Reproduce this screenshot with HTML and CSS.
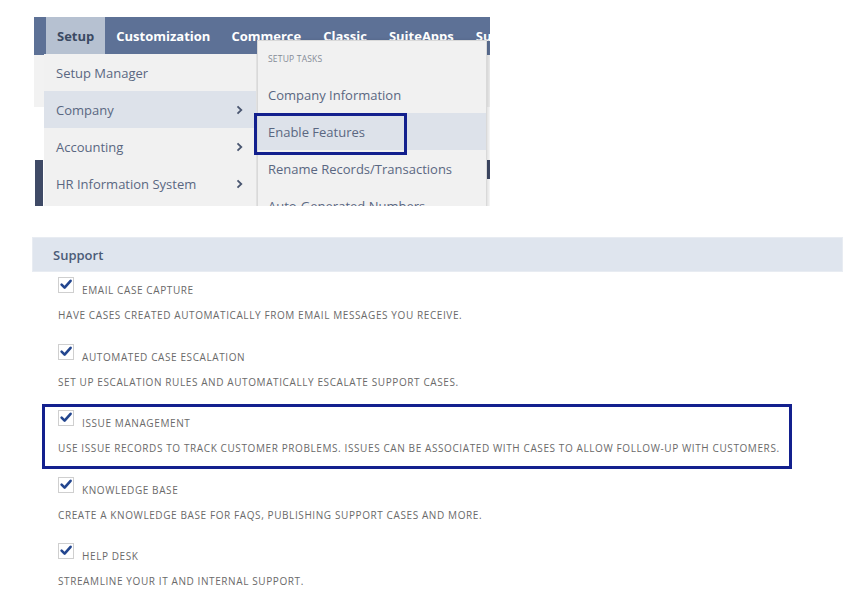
FILE: index.html
```html
<!DOCTYPE html>
<html>
<head>
<meta charset="utf-8">
<link rel="stylesheet" href="styles.css">
</head>
<body>
<div class="shot">
  <nav class="nav">
    <span class="tab tab-active">Setup</span>
    <span class="tab">Customization</span>
    <span class="tab">Commerce</span>
    <span class="tab">Classic</span>
    <span class="tab">SuiteApps</span>
    <span class="tab">Support</span>
  </nav>
  <div class="backdrop">
    <div class="bg-light"></div>
    <div class="bg-white"></div>
    <div class="bg-band"><span class="band-left"></span><span class="band-right"></span></div>
  </div>
  <ul class="menu menu-main">
    <li class="menu-item">Setup Manager</li>
    <li class="menu-item is-hover">Company <svg class="chev" width="7" height="10" viewBox="0 0 7 10"><path d="M1.5 1.3 L5.3 5 L1.5 8.7" fill="none" stroke="#4a5670" stroke-width="1.8"/></svg></li>
    <li class="menu-item">Accounting <svg class="chev" width="7" height="10" viewBox="0 0 7 10"><path d="M1.5 1.3 L5.3 5 L1.5 8.7" fill="none" stroke="#4a5670" stroke-width="1.8"/></svg></li>
    <li class="menu-item">HR Information System <svg class="chev" width="7" height="10" viewBox="0 0 7 10"><path d="M1.5 1.3 L5.3 5 L1.5 8.7" fill="none" stroke="#4a5670" stroke-width="1.8"/></svg></li>
  </ul>
  <ul class="menu menu-sub">
    <li class="menu-head">SETUP TASKS</li>
    <li class="menu-item">Company Information</li>
    <li class="menu-item is-hover">Enable Features</li>
    <li class="menu-item">Rename Records/Transactions</li>
    <li class="menu-item">Auto-Generated Numbers</li>
  </ul>
  <div class="mark mark-menu"></div>
</div>

<section class="support">
  <div class="section-head">Support</div>
  <div class="feature">
    <div class="feature-head">
      <svg class="cb" width="16" height="16" viewBox="0 0 16 16"><rect x="0.5" y="0.5" width="15" height="15" fill="#fff" stroke="#cfcfcf"/><path d="M3.6 7.6 L6.6 10.6 L12.6 3.8" fill="none" stroke="#23468f" stroke-width="2.6" stroke-linecap="round" stroke-linejoin="round"/></svg>
      <span class="feature-label">EMAIL CASE CAPTURE</span>
    </div>
    <p class="feature-desc">HAVE CASES CREATED AUTOMATICALLY FROM EMAIL MESSAGES YOU RECEIVE.</p>
  </div>
  <div class="feature">
    <div class="feature-head">
      <svg class="cb" width="16" height="16" viewBox="0 0 16 16"><rect x="0.5" y="0.5" width="15" height="15" fill="#fff" stroke="#cfcfcf"/><path d="M3.6 7.6 L6.6 10.6 L12.6 3.8" fill="none" stroke="#23468f" stroke-width="2.6" stroke-linecap="round" stroke-linejoin="round"/></svg>
      <span class="feature-label">AUTOMATED CASE ESCALATION</span>
    </div>
    <p class="feature-desc">SET UP ESCALATION RULES AND AUTOMATICALLY ESCALATE SUPPORT CASES.</p>
  </div>
  <div class="feature feature-marked">
    <div class="feature-head">
      <svg class="cb" width="16" height="16" viewBox="0 0 16 16"><rect x="0.5" y="0.5" width="15" height="15" fill="#fff" stroke="#cfcfcf"/><path d="M3.6 7.6 L6.6 10.6 L12.6 3.8" fill="none" stroke="#23468f" stroke-width="2.6" stroke-linecap="round" stroke-linejoin="round"/></svg>
      <span class="feature-label">ISSUE MANAGEMENT</span>
    </div>
    <p class="feature-desc">USE ISSUE RECORDS TO TRACK CUSTOMER PROBLEMS. ISSUES CAN BE ASSOCIATED WITH CASES TO ALLOW FOLLOW-UP WITH CUSTOMERS.</p>
    <div class="mark mark-feature"></div>
  </div>
  <div class="feature">
    <div class="feature-head">
      <svg class="cb" width="16" height="16" viewBox="0 0 16 16"><rect x="0.5" y="0.5" width="15" height="15" fill="#fff" stroke="#cfcfcf"/><path d="M3.6 7.6 L6.6 10.6 L12.6 3.8" fill="none" stroke="#23468f" stroke-width="2.6" stroke-linecap="round" stroke-linejoin="round"/></svg>
      <span class="feature-label">KNOWLEDGE BASE</span>
    </div>
    <p class="feature-desc">CREATE A KNOWLEDGE BASE FOR FAQS, PUBLISHING SUPPORT CASES AND MORE.</p>
  </div>
  <div class="feature">
    <div class="feature-head">
      <svg class="cb" width="16" height="16" viewBox="0 0 16 16"><rect x="0.5" y="0.5" width="15" height="15" fill="#fff" stroke="#cfcfcf"/><path d="M3.6 7.6 L6.6 10.6 L12.6 3.8" fill="none" stroke="#23468f" stroke-width="2.6" stroke-linecap="round" stroke-linejoin="round"/></svg>
      <span class="feature-label">HELP DESK</span>
    </div>
    <p class="feature-desc">STREAMLINE YOUR IT AND INTERNAL SUPPORT.</p>
  </div>
</section>
</body>
</html>
```

FILE: styles.css
```css
* { box-sizing: border-box; }
html, body { margin: 0; padding: 0; background: #fff; }
body { font-family: "Open Sans", "Noto Sans", sans-serif; color: #5a6781; }

.shot {
  position: relative;
  margin: 17px 0 0 34px;
  width: 456px;
  height: 189px;
  overflow: hidden;
  background: #fff;
}

.nav {
  display: flex;
  height: 38px;
  background: #5d7196;
  padding-left: 12px;
  white-space: nowrap;
}
.tab {
  display: flex;
  align-items: center;
  padding: 0 11px;
  color: #fff;
  font-weight: 700;
  font-size: 13px;
}
.tab:nth-child(3) { padding-left: 10px; }
.tab-active { background: #b6c1d1; color: #3b4a63; }

.backdrop { display: flex; flex-direction: column; }
.bg-light { height: 52px; background: #f2f2f2; }
.bg-white { height: 53px; background: #fff; }
.bg-band { display: flex; justify-content: space-between; height: 46px; }
.band-left { width: 8px; margin-left: 1px; background: #3f4a66; }
.band-right { width: 5px; height: 19px; background: #3f4a66; }

.menu {
  list-style: none;
  margin: 0;
  padding: 0;
  position: absolute;
  background: #f1f1f1;
}
.menu-main {
  left: 10px;
  top: 37px;
  width: 213px;
  height: 170px;
  border-right: 1px solid #e2e2e2;
}
.menu-sub {
  left: 223px;
  top: 23px;
  width: 230px;
  height: 180px;
  border: 1px solid #d9d9d9;
  box-shadow: 2px 0 3px rgba(0,0,0,0.12);
}
.menu-item {
  display: flex;
  align-items: center;
  justify-content: space-between;
  height: 37px;
  padding: 0 13px 0 12px;
  font-size: 13px;
  color: #5a6781;
  white-space: nowrap;
}
.menu-sub .menu-item { padding-left: 10px; }
.menu-item.is-hover { background: #dde2ea; }
.menu-head {
  display: flex;
  align-items: center;
  height: 35px;
  padding-left: 10px;
  font-size: 8.5px;
  letter-spacing: 0.2px;
  color: #858b96;
}
.chev { display: block; }

.mark {
  position: absolute;
  border: 3px solid #13208e;
  pointer-events: none;
}
.mark-menu { left: 220px; top: 96px; width: 153px; height: 42px; }

.support { margin-top: 31px; }
.section-head {
  margin-left: 32px;
  width: 811px;
  height: 35px;
  display: flex;
  align-items: center;
  padding-left: 20px;
  background: #dfe5ee;
  border: 1px solid #e8ecf2;
  font-size: 13px;
  font-weight: 600;
  color: #4b5b77;
}

.feature {
  position: relative;
  padding-left: 58px;
  margin-top: 5px;
  height: 61.5px;
}
.feature + .feature { margin-top: 5px; }
.feature-head { display: flex; align-items: flex-start; }
.cb { display: block; flex: none; }
.feature-label {
  margin: 6px 0 0 8px;
  line-height: 14px;
  font-size: 10px;
  letter-spacing: 0.6px;
  color: #6a6a6a;
}
.feature-desc {
  margin: 11px 0 0;
  line-height: 14px;
  font-size: 10px;
  letter-spacing: 0.6px;
  color: #6a6a6a;
  white-space: nowrap;
}
.mark-feature { left: 42px; top: -6px; width: 750px; height: 65px; }
```
